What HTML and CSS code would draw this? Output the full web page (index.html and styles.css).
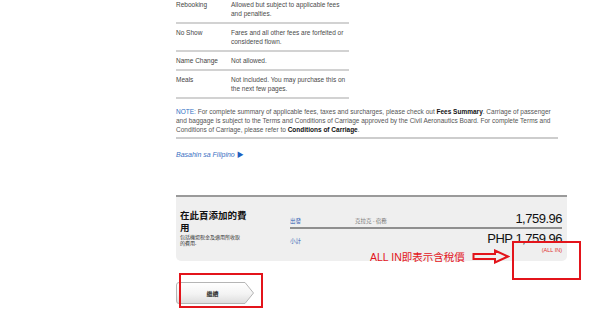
FILE: index.html
```html
<!DOCTYPE html>
<html>
<head>
    <title>Fare Rules</title>
    <link rel="stylesheet" href="styles.css">
</head>
<body>

    <div class="page">
        <table class="rules">
            <tr class="first">
                <td>Rebooking</td>
                <td>Allowed but subject to applicable fees and penalties.</td>
            </tr>
            <tr>
                <td>No Show</td>
                <td>Fares and all other fees are forfeited or considered flown.</td>
            </tr>
            <tr>
                <td>Name Change</td>
                <td>Not allowed.</td>
            </tr>
            <tr>
                <td>Meals</td>
                <td>Not included. You may purchase this on the next few pages.</td>
            </tr>
        </table>

        <p class="note">
            <span class="blue">NOTE:</span> For complete summary of applicable fees, taxes and surcharges, please check out <b>Fees Summary</b>. Carriage of passenger and baggage is subject to the Terms and Conditions of Carriage approved by the Civil Aeronautics Board. For complete Terms and Conditions of Carriage, please refer to <b>Conditions of Carriage</b>.
        </p>
        <hr class="rule">

        <a class="lang" href="#">Basahin sa Filipino <span class="tri">&#9654;</span></a>

        <div class="summary">
            <div class="sum-left">
                <h2 class="sum-title">在此頁添加的費用</h2>
                <p class="sum-sub">包括機場稅金及適用所收取的費用.</p>
            </div>
            <div class="sum-right">
                <div class="sum-row line">
                    <span class="tag">出發</span>
                    <span class="route">克拉克 - 宿務</span>
                    <span class="amount">1,759.96</span>
                </div>
                <div class="sum-row">
                    <span class="tag">小計</span>
                    <span class="amount">PHP 1,759.96</span>
                </div>
                <div class="allin">(ALL IN)</div>
            </div>
        </div>

        <button class="next">
            <svg class="next-shape" width="79" height="22" viewBox="0 0 79 22">
                <defs>
                    <linearGradient id="btn-grad" x1="0" y1="0" x2="0" y2="1">
                        <stop offset="0" stop-color="#ffffff"/>
                        <stop offset="0.55" stop-color="#f3f3f3"/>
                        <stop offset="1" stop-color="#dcdcdc"/>
                    </linearGradient>
                </defs>
                <path d="M3 0.5 H69 L77.5 11 L69 21.5 H3 Q0.5 21.5 0.5 19 V3 Q0.5 0.5 3 0.5 Z" fill="url(#btn-grad)" stroke="#b5b5b5"/>
            </svg>
            <span class="next-label">繼續</span>
        </button>
    </div>

    <!-- red markup drawn over the screenshot -->
    <div class="mark mark-btn"></div>
    <div class="mark mark-total"></div>
    <div class="callout">ALL IN即表示含稅價</div>
    <svg class="callout-arrow" width="38" height="15" viewBox="0 0 38 15">
        <path d="M1.5 5 H23 V1.5 L36 7.5 L23 13.5 V10 H1.5 Z" fill="none" stroke="#e3141b" stroke-width="2" stroke-linejoin="miter"/>
    </svg>

</body>
</html>
```

FILE: styles.css
```css
body {
    margin: 0;
    padding: 0;
    background-color: #fff;
    font-family: "Liberation Sans", Arial, "Noto Sans CJK TC", sans-serif;
    color: #4a4a4a;
    position: relative;
    width: 600px;
    height: 312px;
    overflow: hidden;
}
.page {
    margin-left: 176px;
    width: 391px;
}
.blue {
    color: #2f6fc4;
}

/* fare rules table */
.rules {
    width: 173px;
    border-collapse: collapse;
    font-size: 6.5px;
    line-height: 9px;
}
.rules td {
    padding: 4px 0 4px 0;
    border-bottom: 2px solid #d2d2d2;
    vertical-align: top;
}
.rules .first td {
    padding-top: 0;
}
.rules td:first-child {
    width: 55px;
    color: #444;
}

.note {
    width: 382px;
    margin: 8px 0 0 0;
    font-size: 6.5px;
    line-height: 9px;
    color: #555;
}
.note b {
    color: #111;
}
.rule {
    width: 382px;
    margin: 3px 0 0 0;
    border: none;
    border-top: 2px solid #cdcdcd;
}
.lang {
    display: block;
    margin-top: 12px;
    font-size: 7px;
    line-height: 8px;
    font-style: italic;
    color: #3a6fc2;
    text-decoration: none;
}
.tri {
    font-style: normal;
    font-size: 7px;
    color: #1f5fc0;
}

/* fees summary box */
.summary {
    display: flex;
    margin-top: 36px;
    background-color: #efefef;
    border-top: 2px solid #9a9a9a;
    border-radius: 0 0 5px 5px;
    padding: 12px 5px 7px 4px;
}
.sum-left {
    width: 110px;
    flex: none;
}
.sum-title {
    width: 70px;
    margin: 0;
    font-family: "Noto Sans CJK TC", sans-serif;
    font-size: 9.5px;
    line-height: 12px;
    font-weight: bold;
    color: #111;
}
.sum-sub {
    width: 64px;
    margin: 1px 0 0 0;
    font-family: "Noto Sans CJK TC", sans-serif;
    font-size: 5px;
    line-height: 6px;
    color: #333;
}
.sum-right {
    flex: 1;
}
.sum-row {
    display: flex;
    align-items: baseline;
    padding-top: 3px;
}
.sum-row.line {
    border-bottom: 2px solid #8f8f8f;
    padding-bottom: 1px;
}
.tag {
    width: 65px;
    font-family: "Noto Sans CJK TC", sans-serif;
    font-size: 5.5px;
    color: #2f63b3;
}
.route {
    font-family: "Noto Sans CJK TC", sans-serif;
    font-size: 5.5px;
    color: #777;
}
.amount {
    margin-left: auto;
    font-size: 13px;
    line-height: 14px;
    letter-spacing: -0.5px;
    color: #111;
}
.allin {
    text-align: right;
    font-size: 5.5px;
    line-height: 8px;
    margin-top: 0;
    color: #e03030;
}

/* continue button */
.next {
    display: grid;
    margin-top: 21px;
    padding: 0;
    border: none;
    background: none;
    cursor: pointer;
}
.next-shape,
.next-label {
    grid-area: 1 / 1;
}
.next-label {
    align-self: center;
    justify-self: center;
    margin-right: 6px;
    font-family: "Noto Sans CJK TC", sans-serif;
    font-size: 6px;
    font-weight: bold;
    color: #333;
}

/* annotation marks */
.mark {
    position: absolute;
    border: 2px solid #e3141b;
}
.mark-btn {
    left: 179px;
    top: 273px;
    width: 80px;
    height: 31px;
}
.mark-total {
    left: 512px;
    top: 241px;
    width: 65px;
    height: 35px;
}
.callout {
    position: absolute;
    left: 370px;
    top: 251px;
    font-family: "Liberation Sans", "Noto Sans CJK TC", sans-serif;
    font-size: 10.5px;
    line-height: 12px;
    color: #e3141b;
    white-space: nowrap;
}
.callout-arrow {
    position: absolute;
    left: 472px;
    top: 249px;
}
```
